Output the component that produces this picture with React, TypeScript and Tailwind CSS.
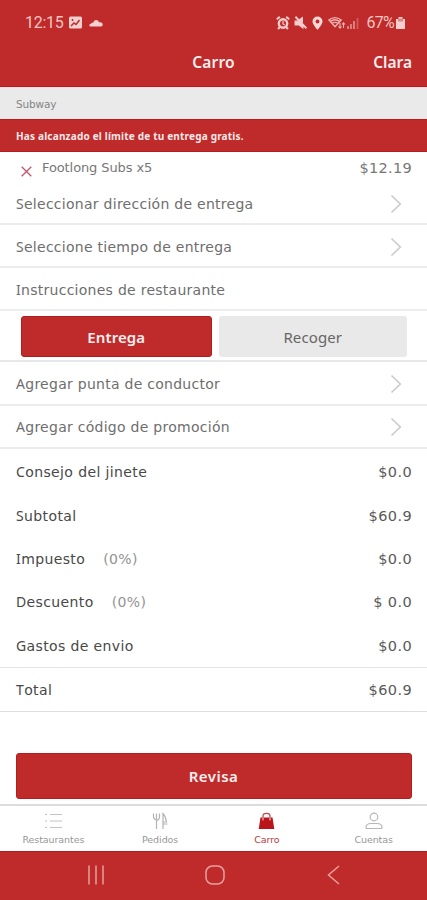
import React from "react";

const RED = "#bf2b2b";

function Chevron() {
  return (
    <svg width="12" height="20" viewBox="0 0 12 20" className="mr-[9px] shrink-0" fill="none" stroke="#cccccc" strokeWidth="1.7">
      <path d="M1.5 1.5 10.3 10 1.5 18.5" />
    </svg>
  );
}

function LinkRow({ label, className, arrow = true }: { label: string; className: string; arrow?: boolean }) {
  return (
    <div className={`flex shrink-0 items-center justify-between border-b-2 border-[#ebecec] pl-4 pr-4 tracking-[0.270px] text-[#6e6e6e] ${className}`}>
      <span className="first-letter:font-['Noto_Sans']">{label}</span>
      {arrow && <Chevron />}
    </div>
  );
}

function AmountRow({ label, pct, amount, className }: { label: string; pct?: string; amount: string; className: string }) {
  return (
    <div className={`flex shrink-0 items-center pl-4 pr-[15px] tracking-[0.380px] text-[#484848] ${className}`}>
      <span className="first-letter:font-['Noto_Sans']">{label}</span>
      {pct && <span className="ml-[18px] text-[#929292]">{pct}</span>}
      <span className="ml-auto text-[14.500px] text-[#5a5a5a]">{amount}</span>
    </div>
  );
}

function StatusBar() {
  return (
    <div className="flex h-[45px] items-center pl-[25px] pr-[22px] font-['Roboto',sans-serif] text-[16px] text-[#f3c5c3]">
      <span className="w-[44px] tracking-[-0.3px]">12:15</span>
      <svg width="13" height="13" viewBox="0 0 13 13" fill="none">
        <rect width="13" height="12" y=".5" rx="1.5" fill="#f3d0ce" />
        <path d="M2 10 5 7l2 1.5L10.5 4M3.5 3v2" stroke={RED} strokeWidth="1.5" />
      </svg>
      <svg width="14" height="8" viewBox="0 0 14 8" className="ml-[7px]" fill="#f6d3d1">
        <path d="M1.5 7.5Q0 7 .4 5.800Q1 4.700 2 4.800L3 3.400 4 4 5 2Q8-.3 10.200 3.200Q13.500 3 13.700 5.500Q13.700 7.500 12 7.500Z" />
      </svg>
      <div className="ml-auto flex items-center">
        <svg width="14" height="14" viewBox="0 0 14 14" className="mr-[4px] -ml-[3px]" fill="none" stroke="#f5cccb" strokeWidth="2.400">
          <circle cx="7" cy="7.500" r="4.200" />
          <path d="M.8 3.300 3.800.9M10.200.9l3 2.400M3.800 11.200 2 13M10.200 11.200 12 13" strokeWidth="2" />
          <path d="M7 5v3l1.800 1" strokeWidth="1.200" />
        </svg>
        <svg width="13" height="14" viewBox="0 0 13 14" fill="#f5cccb">
          <path d="M.5 4.500h3L9.500 10.500V13.200L4.800 9.500H.5zM5 3.300 9 .5v6.500zM.700 1.500l1.400-1.400 11 11.500-1.400 1.400z" />
        </svg>
        <svg width="11" height="14" viewBox="0 0 11 14" className="ml-[5px]" fill="#f8d9d8">
          <path fillRule="evenodd" d="M5.500.5a5 5 0 0 1 5 5c0 3-5 8.300-5 8.300S.5 8.500.5 5.500a5 5 0 0 1 5-5m0 3a2 2 0 1 0 0 4 2 2 0 0 0 0-4" />
        </svg>
        <svg width="18" height="14" viewBox="0 0 18 14" className="ml-[5px]" fill="none" stroke="#efb5b3" strokeWidth="1.300">
          <path d="M.8 4Q7-.9 13.200 4L7 10.800zM2.300 5.500Q7 2 11.700 5.500M4 7.500Q7 5.300 10 7.500" />
          <path d="M12 7v5m-1.500-1.500L12 12.200l1.500-1.700M15.500 12V7m-1.500 1.500 1.500-1.700L17 8.500" strokeWidth="1.100" />
        </svg>
        <svg width="12" height="12" viewBox="0 0 12 12" className="ml-px mt-px" strokeWidth="1.800" stroke="#df8785">
          <path d="M1 12V9M4 12V7M7 12V4" />
          <path d="M10.500 12V1" opacity=".55" />
        </svg>
        <span className="ml-[7px] tracking-[-0.700px]">67%</span>
        <svg width="9" height="12" viewBox="0 0 9 12" className="ml-[2px] mt-px">
          <path d="M2.500 0h4v2H9v10H0V2h2.500z" fill="#f5d0ce" />
          <path d="M2 1.500h5v3H2z" fill="#dc8583" />
        </svg>
      </div>
    </div>
  );
}

const tabs = [
  {
    label: "Restaurantes",
    color: "text-[#979797]",
    icon: (
      <svg width="17" height="18" viewBox="0 0 17 18" stroke="#c3c3c3" fill="none" strokeWidth="1.200">
        <path d="M0 2.500h2M5 2.500h12M0 9h2M5 9h12M0 15.500h2M5 15.500h12" />
      </svg>
    ),
  },
  {
    label: "Pedidos",
    color: "text-[#979797]",
    icon: (
      <svg width="17" height="18" viewBox="0 0 17 18" stroke="#b4b4b4" fill="none" strokeWidth="1.200">
        <path d="M1.500 1.500v3q0 3 3 3.500t3-3.500v-3M4.500 1.500V17M11 17V1.500q2.500 2.500 3.500 8.500H11M11 12h4.500" />
      </svg>
    ),
  },
  {
    label: "Carro",
    color: "text-[#b63b3d]",
    icon: (
      <svg width="17" height="18" viewBox="0 0 17 18">
        <path d="M2.500 5.500h12L16.300 17H.7z" fill="#b9151b" />
        <path d="M5 8V4q0-2.700 3.500-2.700T12 4v4" fill="none" stroke="#c5444a" strokeWidth="1.300" />
        <path d="M5 5.500v3M12 5.500v3" stroke="#eec4c4" />
      </svg>
    ),
  },
  {
    label: "Cuentas",
    color: "text-[#979797]",
    icon: (
      <svg width="18" height="18" viewBox="0 0 18 18" stroke="#b8b8b8" fill="none" strokeWidth="1.200">
        <circle cx="9" cy="5" r="3.800" />
        <path d="M1 15.500Q1 11.500 6 11.500h6q5 0 5 4 0 1-1 1H2q-1 0-1-1Z" />
      </svg>
    ),
  },
];

export default function App() {
  return (
    <div className="flex h-[900px] w-full flex-col overflow-hidden bg-white font-['DejaVu_Sans',sans-serif] text-[14px] leading-[20px]">
      <header className="h-[87px] shrink-0 border-b border-[#b51c1c] bg-[#bf2b2b]">
        <StatusBar />
        <div className="grid grid-cols-3 items-center px-[15px] pt-[7px] font-['Noto_Sans'] text-[15.500px] font-semibold text-[#fbeeee]">
          <span />
          <span className="text-center tracking-[0.200px]">Carro</span>
          <span className="text-right">Clara</span>
        </div>
      </header>

      <div className="flex h-[32px] shrink-0 items-center border-t border-[#f6dede] bg-[#eaeaea] px-4 text-[10.500px] tracking-[-0.150px] text-[#858585]">
        Subway
      </div>
      <div className="flex h-[33px] shrink-0 items-center border-y border-[#b91c1c] bg-[#bf2b2b] px-4 font-['Noto_Sans'] text-[10px] font-bold tracking-[0.190px] text-[#fbe8e8]">
        Has alcanzado el límite de tu entrega gratis.
      </div>

      <div className="flex h-[31px] shrink-0 items-center pl-[21px] pr-[15px] text-[13px] text-[#777]">
        <svg width="11" height="11" viewBox="0 0 11 11" className="mt-[7px]" stroke="#c35468" strokeWidth="1.300">
          <path d="m.7.7 9.600 9.600M10.300.7.7 10.300" />
        </svg>
        <span className="ml-[10px] tracking-[-0.100px]">Footlong Subs x5</span>
        <span className="ml-auto text-[14.500px] tracking-[0.300px]">$12.19</span>
      </div>

      <LinkRow label="Seleccionar dirección de entrega" className="h-[42px] pt-[2px]" />
      <LinkRow label="Seleccione tiempo de entrega" className="h-[43px] pt-[2px]" />
      <LinkRow label="Instrucciones de restaurante" className="h-[43px] pt-[3px]" arrow={false} />

      <div className="flex h-[51px] shrink-0 gap-[7px] border-b-2 border-[#e7e8e8] pl-[21px] pr-[20px] pb-[3px] pt-[5px] font-['Noto_Sans'] text-[15px] tracking-[0.100px]">
        <button className="flex-1 rounded-[3px] border border-[#b51c1c] bg-[#bf2b2b] font-semibold text-[#fbeeee]">Entrega</button>
        <button className="flex-1 rounded-[3px] bg-[#e9e9e9] text-[#666]">Recoger</button>
      </div>

      <LinkRow label="Agregar punta de conductor" className="h-[44px] pt-[2px]" />
      <LinkRow label="Agregar código de promoción" className="h-[43px] pt-px" />

      <AmountRow label="Consejo del jinete" amount="$0.0" className="h-[45px]" />
      <AmountRow label="Subtotal" amount="$60.9" className="h-[43px]" />
      <AmountRow label="Impuesto" pct="(0%)" amount="$0.0" className="h-[43px]" />
      <AmountRow label="Descuento" pct="(0%)" amount="$ 0.0" className="h-[43px]" />
      <AmountRow label="Gastos de envio" amount="$0.0" className="h-[45px] border-b border-[#e4e4e4] pt-[2px]" />
      <AmountRow label="Total" amount="$60.9" className="h-[44px] border-b border-[#dedede] pt-px" />

      <button className="mx-[15.500px] mt-[41px] h-[46px] shrink-0 rounded-[3px] border border-[#b51c1c] bg-[#bf2b2b] font-['Noto_Sans'] text-[15px] font-semibold tracking-[0.500px] text-[#fbeeee]">
        Revisa
      </button>

      <nav className="mt-[5px] grid h-[47px] shrink-0 grid-cols-4 border-t-2 border-[#dcdcdc] text-[9.500px] tracking-[-0.080px]">
        {tabs.map((t) => (
          <div key={t.label} className={`flex flex-col items-center pt-[6px] ${t.color}`}>
            {t.icon}
            <span className="mt-[3px] leading-[14px]">{t.label}</span>
          </div>
        ))}
      </nav>

      <footer className="flex flex-1 items-center border-t border-[#b51c1c] bg-[#bf2b2b] pb-[2px] pl-[87px]">
        <svg width="18" height="20" viewBox="0 0 18 20" stroke="#e6a09f" strokeWidth="1.500">
          <path d="M2 .5v19M9 .5v19M16 .5v19" />
        </svg>
        <svg width="20" height="20" viewBox="0 0 20 20" className="ml-[100px]" fill="none" stroke="#e6a09f" strokeWidth="1.500">
          <rect x="1" y="1" width="18" height="18" rx="6.500" />
        </svg>
        <svg width="13" height="20" viewBox="0 0 13 20" className="ml-[102px]" fill="none" stroke="#e6a09f" strokeWidth="1.500">
          <path d="M12 1 1.500 10 12 19" />
        </svg>
      </footer>
    </div>
  );
}
